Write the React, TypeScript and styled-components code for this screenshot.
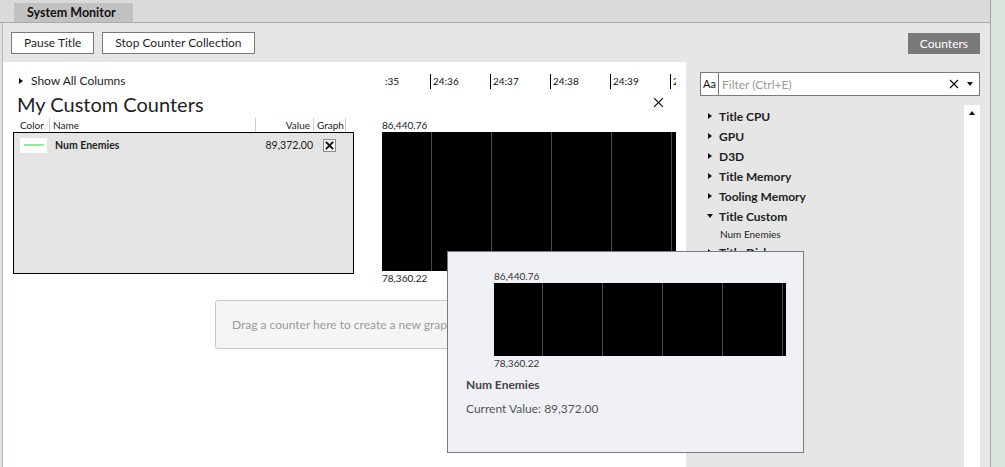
import React from "react";
import styled, { createGlobalStyle } from "styled-components";

const Global = createGlobalStyle`
  html, body { margin: 0; padding: 0; }
  body {
    width: 1005px; height: 467px; overflow: hidden;
    font-family: "Lato", "Liberation Sans", sans-serif;
    color: #1e1e1e; background: #ffffff;
  }
  * { box-sizing: border-box; }
`;

const Root = styled.div`
  position: relative;
  display: flex;
  width: 1005px;
  height: 467px;
  overflow: hidden;
`;

const MainColumn = styled.div`
  flex: 1;
  display: flex;
  flex-direction: column;
  min-width: 0;
`;

const RightEdge = styled.div`
  width: 15px;
  background: #dbe5db;
  border-left: 1px solid #a3a3a3;
`;

const TabStrip = styled.div`
  height: 23px;
  background: #dadada;
  border-bottom: 1px solid #a9a9a9;
  padding: 3px 0 0 14px;
  display: flex;
`;

const Tab = styled.div`
  height: 19px;
  width: 119px;
  padding-left: 13px;
  background: #c1c1c1;
  font-size: 12.5px;
  font-weight: 700;
  line-height: 19px;
  color: #111;
`;

const Body = styled.div`
  flex: 1;
  display: flex;
  min-height: 0;
`;

const LeftEdge = styled.div`
  width: 3px;
  background: #dce5dc;
  border-right: 1px solid #b8b8b8;
`;

const Workspace = styled.div`
  flex: 1;
  display: flex;
  flex-direction: column;
  min-width: 0;
`;

const Toolbar = styled.div`
  height: 39px;
  background: #e6e6e6;
  display: flex;
  align-items: flex-start;
  padding: 9px 10px 0 8px;
  gap: 8px;
`;

const ToolButton = styled.button`
  height: 22px;
  padding: 0 12px;
  background: #ffffff;
  border: 1px solid #7a7a7a;
  font-family: inherit;
  font-size: 12px;
  color: #1e1e1e;
  line-height: 20px;
`;

const CountersButton = styled.button`
  margin: 1px 0 0 auto;
  height: 21px;
  padding: 0 12px;
  background: #7a7a7a;
  border: none;
  font-family: inherit;
  font-size: 12px;
  color: #ffffff;
`;

const Content = styled.div`
  flex: 1;
  display: flex;
  min-height: 0;
`;

const MainPanel = styled.div`
  width: 683px;
  background: #ffffff;
  padding: 10px 0 0 10px;
  display: flex;
  flex-direction: column;
`;

const Sections = styled.div`
  display: grid;
  grid-template-columns: 341px 294px;
  column-gap: 28px;
  grid-template-rows: 18px 28px 14px auto;
`;

const ShowAll = styled.div`
  display: flex;
  align-items: center;
  gap: 8px;
  padding-left: 6px;
  font-size: 12px;
  line-height: 18px;
`;

const TriRight = styled.span`
  width: 0;
  height: 0;
  border-top: 3.5px solid transparent;
  border-bottom: 3.5px solid transparent;
  border-left: 4px solid #111;
`;

const TriDown = styled.span`
  width: 0;
  height: 0;
  border-left: 3.5px solid transparent;
  border-right: 3.5px solid transparent;
  border-top: 4px solid #111;
`;

const TimeAxis = styled.div`
  overflow: hidden;
  display: flex;
  align-items: flex-start;
  padding-top: 2px;
`;

const TickRow = styled.div`
  display: flex;
  margin-left: -12px;
`;

const Tick = styled.div<{ $hideHead?: boolean }>`
  width: 60px;
  flex: none;
  height: 15px;
  border-left: 1px solid #000;
  padding-left: ${(p) => (p.$hideHead ? "14px" : "2px")};
  font-size: 10px;
  line-height: 14px;
  color: #111;
`;

const Heading = styled.h1`
  margin: 0;
  padding-left: 4px;
  font-size: 20px;
  font-weight: 400;
  line-height: 28px;
  color: #1e1e1e;
`;

const CloseRow = styled.div`
  display: flex;
  justify-content: flex-end;
  align-items: center;
  padding: 0 12px 4px 0;
`;

const HeaderRow = styled.div`
  display: grid;
  grid-template-columns: 37px 206px 58px 32px;
  font-size: 10px;
  line-height: 14px;
  color: #222;
`;

const HeaderCell = styled.div<{ $right?: boolean; $sep?: boolean }>`
  padding: 0 3px;
  text-align: ${(p) => (p.$right ? "right" : "left")};
  border-right: ${(p) => (p.$sep ? "1px solid #cfcfcf" : "none")};
  &:first-child { padding-left: 7px; }
`;

const ValueLabel = styled.div`
  font-size: 10px;
  line-height: 14px;
  color: #222;
`;

const ListBox = styled.div`
  height: 142px;
  background: #e4e4e4;
  border: 1px solid #000;
  padding: 4px 17px 0 6px;
`;

const CounterRow = styled.div`
  display: flex;
  align-items: center;
  height: 16px;
`;

const Swatch = styled.div`
  width: 27px;
  height: 15px;
  background: #ffffff;
  display: flex;
  align-items: center;
  justify-content: center;
`;

const SwatchLine = styled.div<{ $color: string }>`
  width: 20px;
  height: 2px;
  background: ${(p) => p.$color};
`;

const CounterName = styled.div`
  margin-left: 8px;
  font-size: 10.5px;
  font-weight: 700;
  flex: 1;
`;

const CounterValue = styled.div`
  font-size: 10.5px;
  color: #222;
  width: 70px;
  text-align: right;
`;

const CheckBox = styled.div`
  margin-left: 10px;
  width: 13px;
  height: 13px;
  border: 1px solid #8a8a8a;
  background: #f4f4f4;
  display: flex;
  align-items: center;
  justify-content: center;
`;

const GraphColumn = styled.div`
  display: flex;
  flex-direction: column;
`;

const GraphSvg = styled.svg`
  display: block;
`;

const DropZone = styled.div`
  margin: 15px 0 0 202px;
  width: 259px;
  height: 49px;
  background: #f5f5f5;
  border: 1px solid #c9c9c9;
  border-radius: 3px;
  padding-left: 16px;
  display: flex;
  align-items: center;
  font-size: 12px;
  color: #9a9a9a;
  white-space: nowrap;
  overflow: hidden;
`;

const SidePanel = styled.div`
  flex: 1;
  background: #e6e6e6;
  padding: 10px 10px 0 14px;
  display: flex;
  flex-direction: column;
  min-width: 0;
`;

const FilterBox = styled.div`
  height: 24px;
  background: #ffffff;
  border: 1px solid #7a7a7a;
  display: flex;
  align-items: center;
`;

const CaseToggle = styled.div`
  width: 18px;
  height: 100%;
  border-right: 1px solid #7a7a7a;
  font-size: 11px;
  line-height: 22px;
  text-align: center;
  color: #111;
`;

const FilterText = styled.div`
  flex: 1;
  padding-left: 3px;
  font-size: 12px;
  color: #9a9a9a;
`;

const FilterIcons = styled.div`
  display: flex;
  align-items: center;
  gap: 8px;
  padding-right: 6px;
`;

const TreeArea = styled.div`
  flex: 1;
  display: flex;
  margin-top: 9px;
  min-height: 0;
`;

const TreeList = styled.div`
  flex: 1;
  display: flex;
  flex-direction: column;
  padding: 1px 0 0 7px;
`;

const TreeItem = styled.div`
  height: 20px;
  display: flex;
  align-items: center;
  gap: 7px;
  font-size: 12px;
  font-weight: 700;
  color: #1e1e1e;
`;

const TriBox = styled.span`
  width: 5px;
  display: flex;
  justify-content: center;
`;

const TreeChild = styled.div`
  height: 16px;
  display: flex;
  align-items: center;
  padding-left: 13px;
  font-size: 10px;
  color: #222;
`;

const ScrollTrack = styled.div`
  width: 16px;
  background: #ffffff;
  display: flex;
  justify-content: center;
  padding-top: 6px;
`;

const ScrollUp = styled.span`
  width: 0;
  height: 0;
  border-left: 3.5px solid transparent;
  border-right: 3.5px solid transparent;
  border-bottom: 4px solid #111;
`;

const Tooltip = styled.div`
  position: absolute;
  left: 447px;
  top: 251px;
  width: 357px;
  height: 202px;
  background: #f0f1f6;
  border: 1px solid #7a7a7a;
  padding: 17px 0 0 18px;
  display: flex;
  flex-direction: column;
`;

const TipGraph = styled.div`
  margin-left: 28px;
  display: flex;
  flex-direction: column;
`;

const TipLabel = styled.div`
  font-size: 10px;
  line-height: 14px;
  color: #333;
`;

const TipName = styled.div`
  margin-top: 7px;
  font-size: 12px;
  font-weight: 700;
  line-height: 16px;
  color: #444;
`;

const TipValue = styled.div`
  margin-top: 8px;
  font-size: 12px;
  line-height: 16px;
  color: #555;
`;

const XIcon = ({ size, stroke = 1.2 }: { size: number; stroke?: number }) => (
  <svg width={size} height={size} viewBox="0 0 10 10">
    <path d="M1 1 L9 9 M9 1 L1 9" stroke="#111" strokeWidth={stroke} fill="none" />
  </svg>
);

const Graph = ({ width, height, lines }: { width: number; height: number; lines: number[] }) => (
  <GraphSvg width={width} height={height}>
    <rect x="0" y="0" width={width} height={height} fill="#000" />
    {lines.map((x) => (
      <line key={x} x1={x + 0.5} x2={x + 0.5} y1="0" y2={height} stroke="#4a4a4a" strokeWidth="1" />
    ))}
  </GraphSvg>
);

const ticks = [":35", "24:36", "24:37", "24:38", "24:39", "2"];
const tree = ["Title CPU", "GPU", "D3D", "Title Memory", "Tooling Memory"];

export default function App() {
  return (
    <>
      <Global />
      <Root>
        <MainColumn>
          <TabStrip>
            <Tab>System Monitor</Tab>
          </TabStrip>
          <Body>
            <LeftEdge />
            <Workspace>
              <Toolbar>
                <ToolButton>Pause Title</ToolButton>
                <ToolButton>Stop Counter Collection</ToolButton>
                <CountersButton>Counters</CountersButton>
              </Toolbar>
              <Content>
                <MainPanel>
                  <Sections>
                    <ShowAll>
                      <TriRight />
                      Show All Columns
                    </ShowAll>
                    <TimeAxis>
                      <TickRow>
                        {ticks.map((t, i) => (
                          <Tick key={t} $hideHead={i === 0}>{t}</Tick>
                        ))}
                      </TickRow>
                    </TimeAxis>
                    <Heading>My Custom Counters</Heading>
                    <CloseRow>
                      <XIcon size={11} />
                    </CloseRow>
                    <HeaderRow>
                      <HeaderCell $sep>Color</HeaderCell>
                      <HeaderCell $sep>Name</HeaderCell>
                      <HeaderCell $sep $right>Value</HeaderCell>
                      <HeaderCell $sep>Graph</HeaderCell>
                    </HeaderRow>
                    <ValueLabel>86,440.76</ValueLabel>
                    <ListBox>
                      <CounterRow>
                        <Swatch>
                          <SwatchLine $color="#90ee90" />
                        </Swatch>
                        <CounterName>Num Enemies</CounterName>
                        <CounterValue>89,372.00</CounterValue>
                        <CheckBox>
                          <XIcon size={9} stroke={2.2} />
                        </CheckBox>
                      </CounterRow>
                    </ListBox>
                    <GraphColumn>
                      <Graph width={294} height={139} lines={[49, 109, 169, 229, 289]} />
                      <ValueLabel>78,360.22</ValueLabel>
                    </GraphColumn>
                  </Sections>
                  <DropZone>Drag a counter here to create a new graph</DropZone>
                </MainPanel>
                <SidePanel>
                  <FilterBox>
                    <CaseToggle>Aa</CaseToggle>
                    <FilterText>Filter (Ctrl+E)</FilterText>
                    <FilterIcons>
                      <XIcon size={10} />
                      <TriDown />
                    </FilterIcons>
                  </FilterBox>
                  <TreeArea>
                    <TreeList>
                      {tree.map((t) => (
                        <TreeItem key={t}>
                          <TriBox><TriRight /></TriBox>
                          {t}
                        </TreeItem>
                      ))}
                      <TreeItem>
                        <TriBox><TriDown /></TriBox>
                        Title Custom
                      </TreeItem>
                      <TreeChild>Num Enemies</TreeChild>
                      <TreeItem>
                        <TriBox><TriRight /></TriBox>
                        Title Disk
                      </TreeItem>
                    </TreeList>
                    <ScrollTrack>
                      <ScrollUp />
                    </ScrollTrack>
                  </TreeArea>
                </SidePanel>
              </Content>
            </Workspace>
          </Body>
        </MainColumn>
        <RightEdge />
        <Tooltip>
          <TipGraph>
            <TipLabel>86,440.76</TipLabel>
            <Graph width={292} height={73} lines={[48, 108, 168, 228, 288]} />
            <TipLabel>78,360.22</TipLabel>
          </TipGraph>
          <TipName>Num Enemies</TipName>
          <TipValue>Current Value: 89,372.00</TipValue>
        </Tooltip>
      </Root>
    </>
  );
}
